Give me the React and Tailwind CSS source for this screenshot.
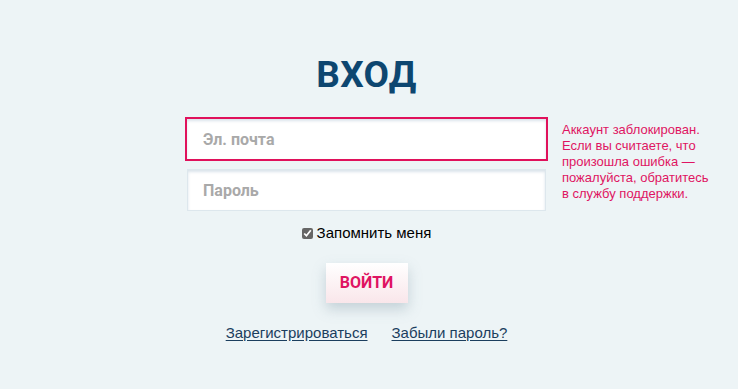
import React from 'react';

const App = () => {
  return (
    <div className="min-h-[389px] w-full bg-[#edf4f6] flex flex-col items-center pt-[50px] pr-[5px] font-['Liberation_Sans',Arial,sans-serif]">
      <h1 className="font-['Roboto',sans-serif] font-bold text-[37px] leading-[50px] text-[#0d4670] tracking-[0.3px]">
        ВХОД
      </h1>

      <form className="relative mt-[17px] w-[363px] flex flex-col items-center" onSubmit={(e) => e.preventDefault()}>
        <input
          type="email"
          placeholder="Эл. почта"
          className="w-[363px] h-[44px] bg-white border-2 border-[#e0115b] px-4 font-['Roboto',sans-serif] font-bold text-[16px] text-gray-700 placeholder:text-[#a9a9a9] outline-none shadow-[inset_0_2px_3px_rgba(150,175,195,0.35)]"
        />
        <p className="absolute left-full top-[5px] ml-[14px] w-[150px] text-[13px] leading-[16px] text-[#df1462]">
          Аккаунт заблокирован. Если вы считаете, что произошла ошибка — пожалуйста, обратитесь в службу поддержки.
        </p>
        <input
          type="password"
          placeholder="Пароль"
          className="mt-[8px] w-[359px] h-[42px] bg-white border border-[#dde7ed] px-[15px] font-['Roboto',sans-serif] font-bold text-[16px] text-gray-700 placeholder:text-[#a9a9a9] outline-none shadow-[inset_0_2px_3px_rgba(150,175,195,0.35)]"
        />

        <label className="mt-[11px] flex items-center gap-[4px] text-[15px] text-black">
          <input type="checkbox" defaultChecked className="w-[11px] h-[11px] m-0 accent-[#666]" />
          Запомнить меня
        </label>

        <button
          type="submit"
          className="mt-[18px] w-[82px] h-[40px] bg-gradient-to-b from-white to-[#f9e6ea] font-['Roboto',sans-serif] font-bold text-[16px] text-[#df1462] shadow-[0_6px_12px_rgba(120,145,160,0.35)]"
        >
          ВОЙТИ
        </button>

        <div className="mt-[19px] flex gap-[24px] text-[15px] text-[#1b3e5e]">
          <a href="#" className="underline underline-offset-2">Зарегистрироваться</a>
          <a href="#" className="underline underline-offset-2">Забыли пароль?</a>
        </div>
      </form>
    </div>
  );
};

export default App;
